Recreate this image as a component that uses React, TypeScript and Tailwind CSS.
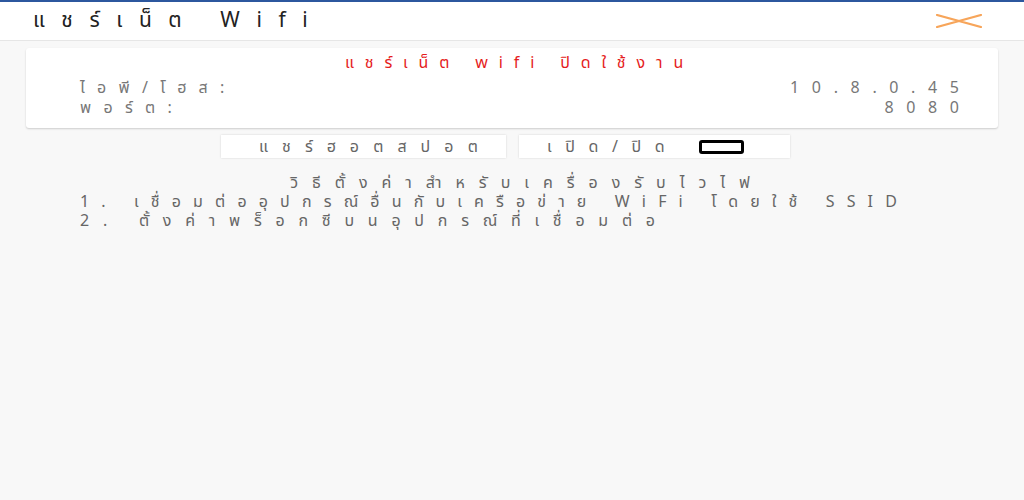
const thai = { fontFamily: '"Noto Sans Thai", "Noto Sans", "DejaVu Sans", sans-serif' }

export default function App() {
  return (
    <div className="w-[1024px] h-[500px] bg-[#f8f8f8] flex flex-col overflow-hidden" style={thai}>
      {/* header */}
      <div className="h-[2px] bg-[#2c579e]" />
      <div className="h-[39px] bg-white border-b border-[#e6e6e6] flex items-center justify-between pl-[33px] pr-[42px]">
        <span className="text-[21px] tracking-[0.79em] text-[#222]">แชร์เน็ต Wifi</span>
        <svg width="46" height="14" viewBox="0 0 46 14" className="text-[#f7a55a]">
          <path d="M1 1 L45 13 M1 13 L45 1" stroke="currentColor" strokeWidth="2.2" strokeLinecap="round" fill="none" />
        </svg>
      </div>

      {/* status card */}
      <div className="mx-[26px] mt-[7px] bg-white rounded-[3px] shadow-[0_1px_2px_rgba(0,0,0,0.18)] pt-[5px] pb-[10px] pl-[54px] pr-[39px] text-[16px] leading-[20px]">
        <div className="text-center tracking-[0.68em] text-[#e51c1c]">แชร์เน็ต wifi ปิดใช้งาน</div>
        <div className="mt-[5px] flex justify-between text-[#777]">
          <span className="tracking-[0.77em]">ไอพี/โฮส:</span>
          <span className="tracking-[0.79em] mr-[-0.79em]">10.8.0.45</span>
        </div>
        <div className="flex justify-between text-[#777]">
          <span className="tracking-[0.77em]">พอร์ต:</span>
          <span className="tracking-[0.79em] mr-[-0.79em]">8080</span>
        </div>
      </div>

      {/* actions */}
      <div className="flex justify-center gap-[13px] mt-[7px] pr-[13px] text-[16px] text-[#666]">
        <button className="w-[285px] h-[23px] bg-white shadow-[0_0_2px_rgba(0,0,0,0.15)] flex items-center justify-center pl-[24px] tracking-[0.88em]">
          แชร์ฮอตสปอต
        </button>
        <button className="w-[271px] h-[23px] bg-white shadow-[0_0_2px_rgba(0,0,0,0.15)] flex items-center justify-between pl-[28px] pr-[46px]">
          <span className="tracking-[0.85em]">เปิด/ปิด</span>
          <span className="w-[45px] h-[14px] border-[3px] border-black rounded-[3px]" />
        </button>
      </div>

      {/* instructions */}
      <div className="mt-[16px] text-[16px] leading-[19px] text-[#666]">
        <div className="text-center pl-[30px] tracking-[0.875em]">วิธีตั้งค่าสำหรับเครื่องรับไวไฟ</div>
        <div className="pl-[80px] tracking-[0.76em]">1. เชื่อมต่ออุปกรณ์อื่นกับเครือข่าย WiFi โดยใช้ SSID</div>
        <div className="pl-[80px] tracking-[0.86em]">2. ตั้งค่าพร็อกซีบนอุปกรณ์ที่เชื่อมต่อ</div>
      </div>
    </div>
  )
}
